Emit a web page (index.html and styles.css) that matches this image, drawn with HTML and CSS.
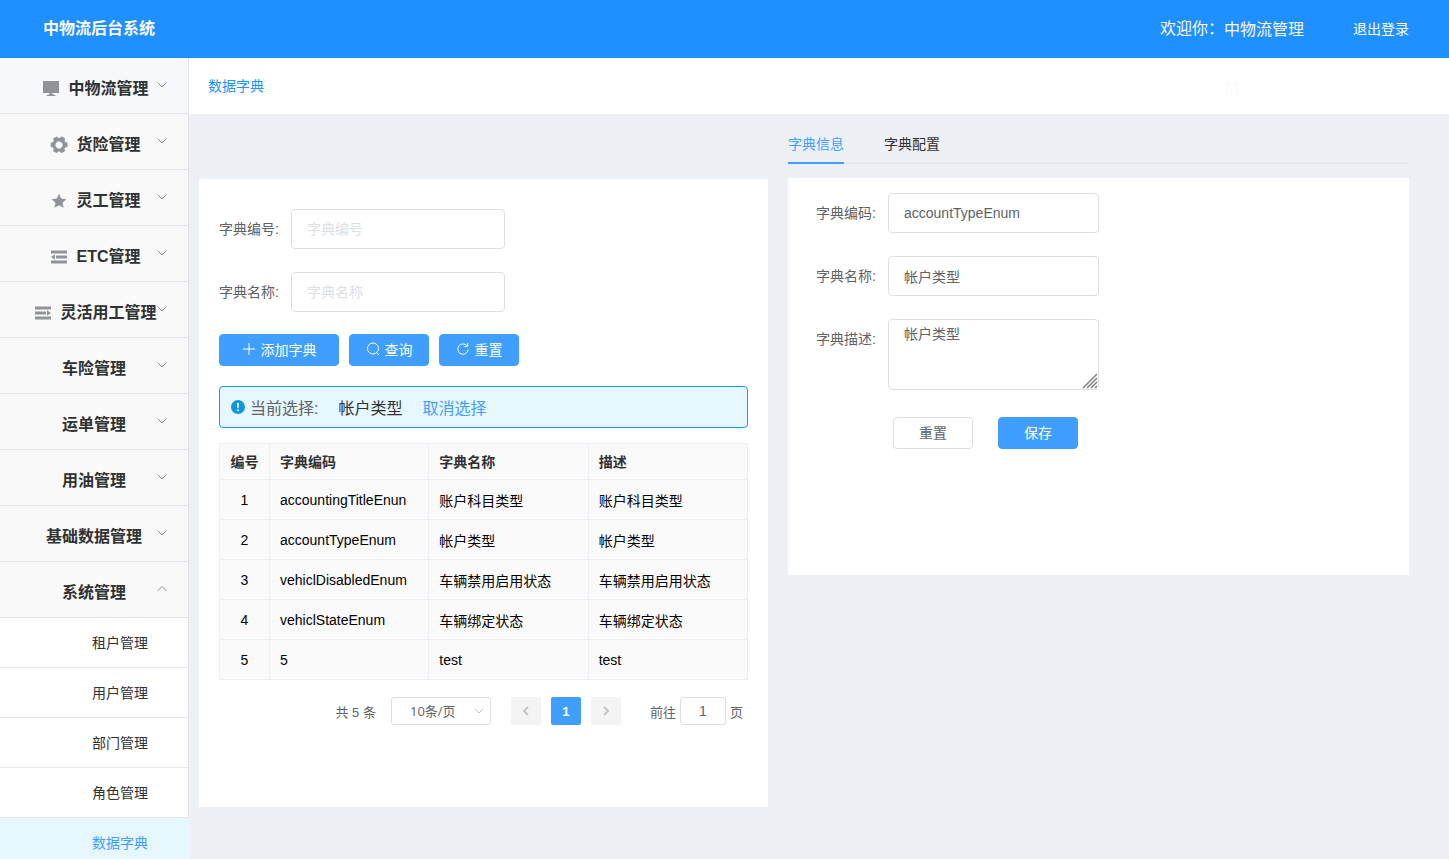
FILE: index.html
```
<!DOCTYPE html>
<html lang="zh-CN">
<head>
<meta charset="utf-8">
<title>中物流后台系统</title>
<link rel="stylesheet" href="styles.css">
</head>
<body>
<div class="app">
  <header class="header">
    <h1 class="brand">中物流后台系统</h1>
    <div class="welcome"><span>欢迎你：</span><span class="user-name">中物流管理员</span></div>
    <a class="logout" href="#">退出登录</a>
  </header>
  <div class="body">
    <nav class="sidebar">
      <button class="menu-item hovered" type="button"><span class="menu-icon"><svg width="16" height="16" viewBox="0 0 16 16"><path d="M0 0h16v12H0zM6.500 12h3v2h-3zM5 13.500h6l2 1.500H3z"/></svg></span>中物流管理<svg class="arrow" viewBox="0 0 12 12"><path d="M1.500 3.500 6 8l4.500-4.500"/></svg></button>
      <button class="menu-item" type="button"><span class="menu-icon"><svg width="18" height="18" viewBox="0.500 0.200 17 17"><path transform="rotate(30 9 8.700)" fill-rule="evenodd" d="M6.600 2.500 6.900.500h4.200l.3 2 1.500.9 1.900-.7 2.100 3.600-1.600 1.300v1.800l1.600 1.300-2.100 3.600-1.900-.7-1.500.9-.3 2H6.900l-.3-2-1.500-.9-1.900.7-2.100-3.600 1.600-1.300V7.600L1.100 6.300l2.100-3.600 1.900.7zM9 5.400a3.300 3.300 0 1 0 0 6.600A3.300 3.300 0 0 0 9 5.400z"/></svg></span>货险管理<svg class="arrow" viewBox="0 0 12 12"><path d="M1.500 3.500 6 8l4.500-4.500"/></svg></button>
      <button class="menu-item" type="button"><span class="menu-icon"><svg width="16" height="16" viewBox="0 0 16 16"><path d="m8 .8 2.200 4.800 5.200.6-3.900 3.500 1.100 5.100L8 12.200l-4.600 2.600 1.100-5.100L.6 6.200l5.200-.6z"/></svg></span>灵工管理<svg class="arrow" viewBox="0 0 12 12"><path d="M1.500 3.500 6 8l4.500-4.500"/></svg></button>
      <button class="menu-item" type="button"><span class="menu-icon"><svg width="16" height="16" viewBox="0 0 16 16"><path d="M0 1.500h16v3H0zM5 6.500h11v3H5zM0 11.500h16v3H0zM0 8l4-2.700v5.400z"/></svg></span>ETC管理<svg class="arrow" viewBox="0 0 12 12"><path d="M1.500 3.500 6 8l4.500-4.500"/></svg></button>
      <button class="menu-item" type="button"><span class="menu-icon"><svg width="16" height="16" viewBox="0 0 16 16"><path d="M0 1.500h16v3H0zM0 6.500h11v3H0zM0 11.500h16v3H0zM16 8l-4-2.700v5.400z"/></svg></span>灵活用工管理<svg class="arrow" viewBox="0 0 12 12"><path d="M1.500 3.500 6 8l4.500-4.500"/></svg></button>
      <button class="menu-item" type="button">车险管理<svg class="arrow" viewBox="0 0 12 12"><path d="M1.500 3.500 6 8l4.500-4.500"/></svg></button>
      <button class="menu-item" type="button">运单管理<svg class="arrow" viewBox="0 0 12 12"><path d="M1.500 3.500 6 8l4.500-4.500"/></svg></button>
      <button class="menu-item" type="button">用油管理<svg class="arrow" viewBox="0 0 12 12"><path d="M1.500 3.500 6 8l4.500-4.500"/></svg></button>
      <button class="menu-item" type="button">基础数据管理<svg class="arrow" viewBox="0 0 12 12"><path d="M1.500 3.500 6 8l4.500-4.500"/></svg></button>
      <button class="menu-item" type="button">系统管理<svg class="arrow" viewBox="0 0 12 12"><path d="M1.500 8 6 3.500 10.500 8"/></svg></button>
      <a class="sub-item" href="#">租户管理</a>
      <a class="sub-item" href="#">用户管理</a>
      <a class="sub-item" href="#">部门管理</a>
      <a class="sub-item" href="#">角色管理</a>
      <a class="sub-item active" href="#">数据字典</a>
    </nav>
    <main class="main">
      <div class="crumbs"><a href="#">数据字典</a></div>
      <div class="content">
        <section class="card list-card">
          <form class="search">
            <div class="field"><label for="q-code">字典编号:</label><input id="q-code" type="text" placeholder="字典编号"></div>
            <div class="field"><label for="q-name">字典名称:</label><input id="q-name" type="text" placeholder="字典名称"></div>
            <div class="actions">
              <button class="btn primary wide" type="button"><svg width="14" height="14" viewBox="0 0 14 14"><path d="M7 1v12M1 7h12"/></svg>添加字典</button>
              <button class="btn primary" type="button"><svg width="14" height="14" viewBox="0 0 14 14"><circle cx="7" cy="6.500" r="5.500"/><path d="m10.500 10.500 2.500 2.500"/></svg>查询</button>
              <button class="btn primary" type="button"><svg width="14" height="14" viewBox="0 0 14 14"><path d="M11.200 4A5.200 5.200 0 1 0 12.200 7.500M11.700 1v3.500H8.500"/></svg>重置</button>
            </div>
          </form>
          <div class="notice">
            <svg width="14" height="14" viewBox="0 0 14 14"><circle cx="7" cy="7" r="7" fill="#1296db"/><path d="M6 3h2l-.4 5H6.400z" fill="#fff"/><circle cx="7" cy="10.200" r="1" fill="#fff"/></svg>
            <span class="notice-label">当前选择:</span><span class="notice-value">帐户类型</span><a href="#">取消选择</a>
          </div>
          <table class="table">
            <colgroup><col class="col-no"><col><col><col></colgroup>
            <thead><tr><th>编号</th><th>字典编码</th><th>字典名称</th><th>描述</th></tr></thead>
            <tbody>
              <tr><td>1</td><td>accountingTitleEnun</td><td>账户科目类型</td><td>账户科目类型</td></tr>
              <tr><td>2</td><td>accountTypeEnum</td><td>帐户类型</td><td>帐户类型</td></tr>
              <tr><td>3</td><td>vehiclDisabledEnum</td><td>车辆禁用启用状态</td><td>车辆禁用启用状态</td></tr>
              <tr><td>4</td><td>vehiclStateEnum</td><td>车辆绑定状态</td><td>车辆绑定状态</td></tr>
              <tr><td>5</td><td>5</td><td>test</td><td>test</td></tr>
            </tbody>
          </table>
          <div class="pager">
            <span class="total">共 5 条</span>
            <span class="size"><select aria-label="每页条数"><option>10条/页</option></select><svg class="size-arrow" viewBox="0 0 12 12"><path d="M2 4l4 4 4-4"/></svg></span>
            <div class="pages">
              <button class="page" type="button" aria-label="上一页" disabled><svg width="12" height="12" viewBox="0 0 12 12"><path d="M8 2 4 6l4 4"/></svg></button>
              <button class="page current" type="button">1</button>
              <button class="page" type="button" aria-label="下一页" disabled><svg width="12" height="12" viewBox="0 0 12 12"><path d="m4 2 4 4-4 4"/></svg></button>
            </div>
            <label class="jump">前往<input type="text" value="1">页</label>
          </div>
        </section>
        <section class="detail">
          <div class="tabs" role="tablist">
            <button class="tab selected" type="button" role="tab" aria-selected="true">字典信息</button>
            <button class="tab" type="button" role="tab" aria-selected="false">字典配置</button>
          </div>
          <form class="card detail-card">
            <div class="field"><label for="d-code">字典编码:</label><input id="d-code" type="text" value="accountTypeEnum"></div>
            <div class="field"><label for="d-name">字典名称:</label><input id="d-name" type="text" value="帐户类型"></div>
            <div class="field top"><label for="d-desc">字典描述:</label><div class="area"><textarea id="d-desc">帐户类型</textarea><svg class="grip" viewBox="0 0 16 16"><path d="M1 15 15 1M5 15 15 5M9 15l6-6M13 15l2-2"/></svg></div></div>
            <div class="detail-actions">
              <button class="btn plain" type="button">重置</button>
              <button class="btn primary" type="button">保存</button>
            </div>
          </form>
        </section>
      </div>
    </main>
  </div>
</div>
</body>
</html>
```
FILE: styles.css
```
* { box-sizing: border-box; }
body {
  margin: 0;
  font-family: "Liberation Sans", "Noto Sans CJK SC", sans-serif;
  font-size: 14px;
  color: #303133;
  background: #edf1f6;
}
button, input, textarea, select { font-family: inherit; font-size: 14px; margin: 0; }
button { cursor: pointer; padding: 0; }
a { text-decoration: none; color: #409eff; }
svg { flex: none; }

.app { display: flex; flex-direction: column; height: 100vh; overflow: hidden; }

.header {
  position: relative;
  z-index: 1;
  flex: none;
  display: flex;
  align-items: flex-start;
  height: 58px;
  padding: 0 40px 0 43px;
  background: #1e90ff;
  color: #fdf8fb;
  line-height: 58px;
}
.brand { margin: 0; font-size: 16px; }
.welcome { display: flex; margin-left: auto; font-size: 16px; }
.user-name { width: 80px; line-height: 60px; }
.logout { margin-left: 49px; color: #fff; }

.body { flex: 1; display: flex; min-height: 0; }
.sidebar { flex: none; width: 189px; overflow: hidden; }
.menu-item {
  position: relative;
  display: flex;
  align-items: center;
  justify-content: center;
  width: 100%;
  height: 56px;
  padding-top: 2px;
  border: 0;
  border-right: 1px solid #e2e3e6;
  border-bottom: 1px solid #e2e3e6;
  background: #f9f9f9;
  color: #303133;
  font-size: 16px;
  font-weight: 700;
}
.menu-item.hovered { background: #f7f8fb; }
.menu-icon {
  display: flex;
  justify-content: center;
  width: 24px;
  margin-right: 5px;
  padding-top: 4px;
  fill: #909399;
}
.arrow {
  position: absolute;
  top: 21px;
  right: 20px;
  width: 12px;
  height: 12px;
  fill: none;
  stroke: #909399;
}
.sub-item {
  display: flex;
  align-items: center;
  justify-content: center;
  height: 50px;
  padding: 0 0 2px 52px;
  border-right: 1px solid #e2e3e6;
  border-bottom: 1px solid #e8e8ea;
  background: #fff;
  color: #303133;
}
.sub-item.active { background: #e6f7ff; border-color: transparent; color: #409eff; }

.main { flex: 1; min-width: 0; }
.crumbs { height: 56px; padding-left: 19px; background: #fff; line-height: 56px; }
.crumbs a { color: #1e90ff; }
.content {
  display: grid;
  grid-template-columns: 569fr 621fr;
  gap: 20px;
  align-items: start;
  padding: 10px 40px 0 10px;
}
.card { background: #fff; }
.list-card { margin-top: 55px; min-height: 628px; padding: 30px 20px; }

.field { display: flex; align-items: center; margin-bottom: 23px; }
.field label { color: #606266; line-height: 40px; padding-right: 12px; text-align: right; }
.field input, .field textarea {
  border: 1px solid #dcdfe6;
  border-radius: 4px;
  background: #fff;
  color: #606266;
  outline: none;
}
.field input { height: 40px; padding: 0 15px; }
.field input::placeholder { color: #dcdfe6; }
.search label { width: 72px; text-align: left; }
.search input { width: 214px; }
.search .field:nth-child(2) { margin-bottom: 22px; }
.actions { display: flex; gap: 10px; }

.btn {
  display: flex;
  align-items: center;
  justify-content: center;
  gap: 5px;
  width: 80px;
  height: 32px;
  padding-bottom: 2px;
  border: 1px solid #409eff;
  border-radius: 4px;
}
.btn.wide { width: 120px; }
.btn.primary { background: #409eff; color: #fff; }
.btn.plain { background: #fff; border-color: #dcdfe6; color: #606266; }
.btn svg { fill: none; stroke: #fff; }

.notice {
  display: flex;
  align-items: center;
  height: 42px;
  margin: 20px 0 15px;
  padding: 0 11px;
  border: 1px solid #1e90ff;
  border-radius: 4px;
  background: #e6f7ff;
  font-size: 16px;
}
.notice-label { margin-left: 5px; color: #606266; }
.notice-value { margin: 0 20px; }

.table {
  width: 100%;
  table-layout: fixed;
  border-collapse: collapse;
  background: #fafafa;
  color: #000;
}
.table .col-no { width: 50px; }
.table th, .table td { border: 1px solid #ebeef5; padding: 0 10px; text-align: left; }
.table th { height: 36px; padding-bottom: 2px; color: #303133; }
.table td { height: 40px; }
.table th:first-child, .table td:first-child { padding-left: 0; padding-right: 0; text-align: center; }

.pager {
  display: flex;
  align-items: center;
  justify-content: flex-end;
  margin-top: 17px;
  padding-right: 5px;
  color: #606266;
  font-size: 13px;
}
.size { position: relative; margin: 0 20px 0 15px; }
.size select {
  display: block;
  appearance: none;
  width: 100px;
  height: 28px;
  padding: 0 18px;
  border: 1px solid #dcdfe6;
  border-radius: 3px;
  background: #fff;
  color: #606266;
  font-family: "Open Sans", "Noto Sans CJK SC", sans-serif;
  font-size: 13px;
}
.size-arrow {
  position: absolute;
  top: 8px;
  right: 6px;
  width: 12px;
  height: 12px;
  fill: none;
  stroke: #c0c4cc;
  pointer-events: none;
}
.pages { display: flex; gap: 10px; }
.page {
  display: flex;
  align-items: center;
  justify-content: center;
  width: 30px;
  height: 28px;
  border: 0;
  border-radius: 2px;
  background: #f4f4f5;
  color: #fff;
  font-size: 13px;
  font-weight: 700;
}
.page.current { background: #409eff; }
.page svg { fill: none; stroke: #c0c4cc; stroke-width: 2; }
.jump { display: flex; align-items: center; gap: 4px; margin-left: 29px; }
.jump input {
  width: 46px;
  height: 28px;
  padding: 0 3px;
  border: 1px solid #dcdfe6;
  border-radius: 3px;
  color: #606266;
  text-align: center;
}

.tabs { display: flex; gap: 40px; height: 40px; border-bottom: 2px solid #e4e7ed; }
.tab {
  height: 40px;
  border: 0;
  border-bottom: 2px solid transparent;
  background: none;
  color: #303133;
}
.tab.selected { border-color: #409eff; color: #409eff; }
.detail-card { margin-top: 14px; min-height: 397px; padding-top: 15px; }
.detail-card label { width: 100px; }
.detail-card input, .area { width: 211px; }
.field.top { align-items: flex-start; margin-bottom: 27px; }
.area { position: relative; }
.area textarea {
  display: block;
  width: 100%;
  height: 71px;
  padding: 4px 15px;
  line-height: 21px;
  resize: none;
}
.grip {
  position: absolute;
  right: 1px;
  bottom: 1px;
  width: 16px;
  height: 16px;
  fill: none;
  stroke: #808080;
  stroke-width: 1.5;
}
.detail-actions { display: flex; gap: 25px; padding-left: 105px; }
```
